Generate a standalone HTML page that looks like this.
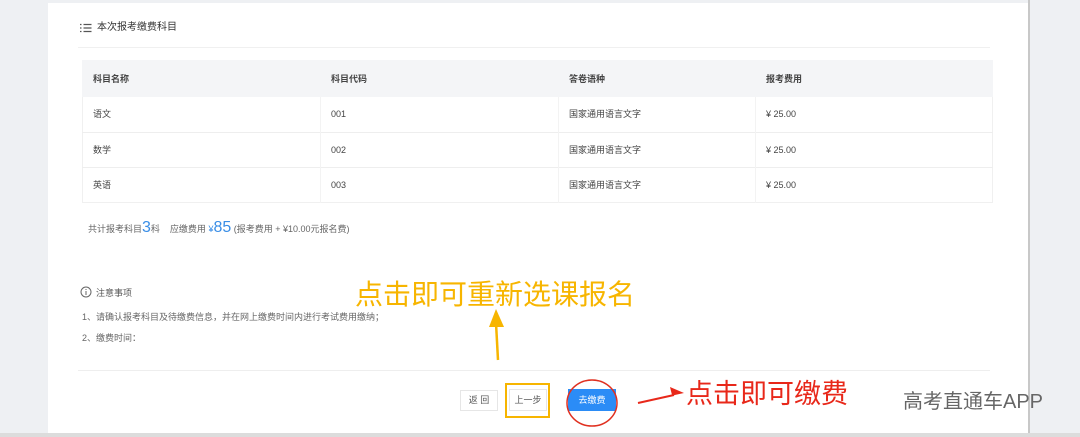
<!DOCTYPE html>
<html><head><meta charset="utf-8"><style>
body{margin:0;width:1080px;height:437px;position:relative;overflow:hidden;background:#fff;font-family:"Liberation Sans","Noto Sans CJK SC",sans-serif;color:#333}
.a{position:absolute}
.t{font-size:9px;color:#444;line-height:12px;white-space:nowrap}
</style></head><body>
<div class="a" style="left:0;top:0;width:1080px;height:437px;background:#eef0f3"></div>
<div class="a" style="left:48px;top:3px;width:980px;height:431px;background:#fff"></div>
<div class="a" style="left:1028px;top:0;width:2px;height:437px;background:#c8c8c8"></div>
<div class="a" style="left:0;top:433px;width:1080px;height:4px;background:#dcdcdc"></div>
<svg class="a" style="left:80px;top:23px" width="12" height="10"><g stroke="#555" stroke-width="1.2"><path d="M0 1.5h1.5M3.5 1.5h8M0 5h1.5M3.5 5h8M0 8.5h1.5M3.5 8.5h8"/></g></svg>
<div class="a t" style="left:97px;top:22px;font-size:10px;color:#333">本次报考缴费科目</div>
<div class="a" style="left:78px;top:47px;width:912px;height:1px;background:#f0f0f0"></div>
<div class="a" style="left:82px;top:60px;width:911px;height:143px;border:1px solid #f0f0f0;box-sizing:border-box"></div>
<div class="a" style="left:82px;top:60px;width:911px;height:37px;background:#f4f5f7"></div>
<div class="a" style="left:82px;top:132px;width:911px;height:1px;background:#eee"></div>
<div class="a" style="left:82px;top:167px;width:911px;height:1px;background:#eee"></div>
<div class="a" style="left:320px;top:97px;width:1px;height:106px;background:#f3f3f3"></div>
<div class="a" style="left:558px;top:97px;width:1px;height:106px;background:#f3f3f3"></div>
<div class="a" style="left:755px;top:97px;width:1px;height:106px;background:#f3f3f3"></div>
<div class="a t" style="left:93px;top:73px;font-weight:bold">科目名称</div>
<div class="a t" style="left:331px;top:73px;font-weight:bold">科目代码</div>
<div class="a t" style="left:569px;top:73px;font-weight:bold">答卷语种</div>
<div class="a t" style="left:766px;top:73px;font-weight:bold">报考费用</div>
<div class="a t" style="left:93px;top:108px">语文</div><div class="a t" style="left:331px;top:108px">001</div><div class="a t" style="left:569px;top:108px">国家通用语言文字</div><div class="a t" style="left:766px;top:108px">¥ 25.00</div>
<div class="a t" style="left:93px;top:144px">数学</div><div class="a t" style="left:331px;top:144px">002</div><div class="a t" style="left:569px;top:144px">国家通用语言文字</div><div class="a t" style="left:766px;top:144px">¥ 25.00</div>
<div class="a t" style="left:93px;top:179px">英语</div><div class="a t" style="left:331px;top:179px">003</div><div class="a t" style="left:569px;top:179px">国家通用语言文字</div><div class="a t" style="left:766px;top:179px">¥ 25.00</div>
<div class="a" style="left:88px;top:219px;font-size:9px;color:#666;white-space:nowrap">共计报考科目<span style="font-size:16px;color:#3a8ee6">3</span>科 &nbsp;&nbsp;&nbsp;应缴费用 <span style="color:#3a8ee6">¥<span style="font-size:16px">85</span></span> (报考费用 + ¥10.00元报名费)</div>
<svg class="a" style="left:80px;top:286px" width="12" height="12"><circle cx="6" cy="6" r="5" fill="none" stroke="#666"/><path d="M6 5v4M6 3v1" stroke="#666"/></svg>
<div class="a t" style="left:96px;top:287px;color:#555">注意事项</div>
<div class="a t" style="left:82px;top:311px;color:#666">1、请确认报考科目及待缴费信息，并在网上缴费时间内进行考试费用缴纳；</div>
<div class="a t" style="left:82px;top:332px;color:#666">2、缴费时间：</div>
<div class="a" style="left:78px;top:370px;width:912px;height:1px;background:#eee"></div>
<div class="a" style="left:355px;top:273px;font-size:28px;color:#f7b500;white-space:nowrap">点击即可重新选课报名</div>
<svg class="a" style="left:480px;top:305px" width="40" height="60"><path d="M18 55L16 18" stroke="#f7b500" stroke-width="2.5"/><path d="M9 22L16 4L24 22Z" fill="#f7b500"/></svg>
<div class="a" style="left:460px;top:390px;width:38px;height:21px;border:1px solid #e6e6e6;box-sizing:border-box;font-size:9px;color:#555;text-align:center;line-height:19px">返 回</div>
<div class="a" style="left:509px;top:389px;width:38px;height:22px;border:1px solid #e6e6e6;box-sizing:border-box;font-size:9px;color:#555;text-align:center;line-height:20px">上一步</div>
<div class="a" style="left:505px;top:383px;width:45px;height:35px;border:2px solid #f7b500;box-sizing:border-box"></div>
<div class="a" style="left:568px;top:389px;width:48px;height:22px;background:#2b8cf6;font-size:9px;color:#fff;text-align:center;line-height:22px">去缴费</div>
<svg class="a" style="left:560px;top:375px" width="66" height="56"><ellipse cx="32" cy="28" rx="25" ry="23" fill="none" stroke="#e03020" stroke-width="1.5"/></svg>
<svg class="a" style="left:632px;top:385px" width="56" height="25"><path d="M6 18L52 8L38 2L40 10Z" fill="#e8281a"/><path d="M6 18L42 10" stroke="#e8281a" stroke-width="2"/></svg>
<div class="a" style="left:686px;top:372px;font-size:27px;color:#e8281a;white-space:nowrap">点击即可缴费</div>
<div class="a" style="left:903px;top:385px;font-size:20px;color:#666;white-space:nowrap">高考直通车APP</div>
</body></html>
